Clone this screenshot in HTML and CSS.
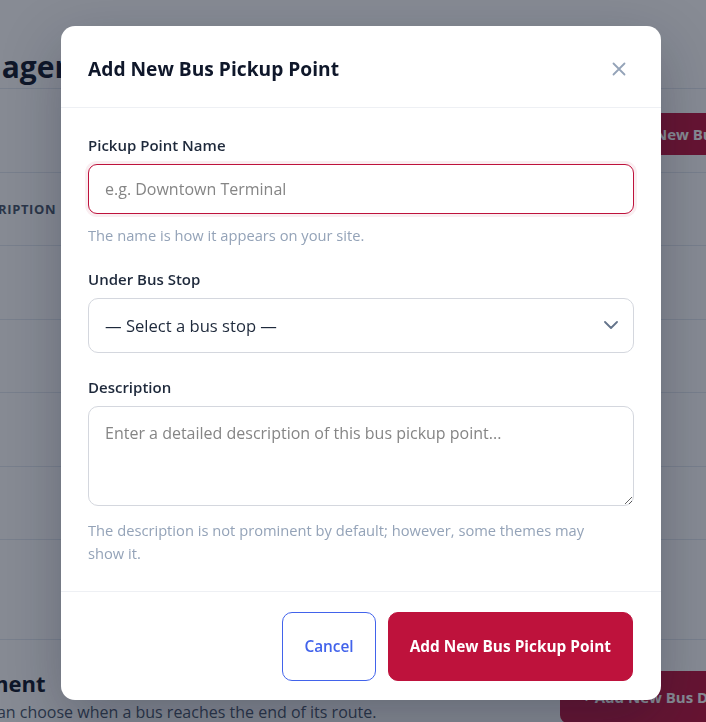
FILE: index.html
```html
<!DOCTYPE html>
<html lang="en">
<head>
<meta charset="utf-8">
<title>Add New Bus Pickup Point</title>
<link rel="stylesheet" href="styles.css">
</head>
<body>
<div class="page">
  <div class="page-head">
    <h1 class="page-title">Pickup Point Management</h1>
  </div>
  <div class="toolbar">
    <button class="page-btn" type="button">+ Add New Bus Pickup Point</button>
  </div>
  <div class="table">
    <div class="trow thead"><span class="th">Name</span><span class="th">Description</span><span class="th">Bus Stop</span></div>
    <div class="trow"></div>
    <div class="trow"></div>
    <div class="trow"></div>
    <div class="trow"></div>
    <div class="tfoot"></div>
  </div>
  <div class="section">
    <div class="section-text">
      <h2 class="section-title">Bus Return Arrangement</h2>
      <p class="section-desc">In this section, an operator can choose when a bus reaches the end of its route.</p>
    </div>
    <button class="page-btn page-btn-lg" type="button">+ Add New Bus Drop-off Point</button>
  </div>
</div>

<div class="overlay">
  <div class="modal" role="dialog" aria-labelledby="modal-title">
    <div class="modal-header">
      <h2 class="modal-title" id="modal-title">Add New Bus Pickup Point</h2>
      <button class="close-btn" type="button" aria-label="Close">
        <svg width="14" height="14" viewBox="0 0 14 14" fill="none" stroke="currentColor" stroke-width="1.8" stroke-linecap="round"><path d="M1.5 1.5L12.5 12.5M12.5 1.5L1.5 12.5"/></svg>
      </button>
    </div>
    <div class="modal-body">
      <div class="field">
        <label class="field-label" for="pp-name">Pickup Point Name</label>
        <input class="control control-focus" id="pp-name" type="text" placeholder="e.g. Downtown Terminal">
        <p class="hint">The name is how it appears on your site.</p>
      </div>
      <div class="field">
        <label class="field-label" for="pp-stop">Under Bus Stop</label>
        <div class="select-wrap">
          <select class="control control-select" id="pp-stop">
            <option>— Select a bus stop —</option>
          </select>
          <svg class="chevron" width="14" height="8" viewBox="0 0 14 8" fill="none" stroke="currentColor" stroke-width="1.8" stroke-linecap="round" stroke-linejoin="round"><path d="M1 1L7 7L13 1"/></svg>
        </div>
      </div>
      <div class="field">
        <label class="field-label" for="pp-desc">Description</label>
        <textarea class="control control-area" id="pp-desc" placeholder="Enter a detailed description of this bus pickup point..."></textarea>
        <p class="hint hint-long">The description is not prominent by default; however, some themes may show it.</p>
      </div>
    </div>
    <div class="modal-footer">
      <button class="btn btn-outline" type="button">Cancel</button>
      <button class="btn btn-primary" type="button">Add New Bus Pickup Point</button>
    </div>
  </div>
</div>
</body>
</html>
```

FILE: styles.css
```css
* { box-sizing: border-box; }

html, body {
  margin: 0;
  padding: 0;
  height: 100%;
  overflow: hidden;
  background: #ffffff;
  font-family: "Open Sans", "Noto Sans", Arial, sans-serif;
  color: #0f172a;
}

/* ---------- background page ---------- */
.page {
  width: 1200px;
  margin-left: -300px;
  padding: 0 40px;
}

.page-head {
  padding-top: 46px;
  border-bottom: 1px solid #e2e8f0;
}

.page-title {
  margin: 0;
  font-size: 30px;
  line-height: 42px;
  font-weight: 700;
  color: #0f172a;
}

.toolbar {
  display: flex;
  justify-content: flex-end;
  padding: 24px 20px 17px 0;
  border-bottom: 1px solid #e2e8f0;
}

.page-btn {
  height: 42px;
  padding: 0 22px;
  border: 0;
  border-radius: 8px;
  background: #be123c;
  color: #ffffff;
  font-family: inherit;
  font-size: 15px;
  font-weight: 700;
  white-space: nowrap;
  flex: none;
}

.page-btn-lg {
  height: 52px;
  margin-top: 3px;
}

.trow {
  display: grid;
  grid-template-columns: 223px 300px 1fr;
  align-items: center;
  height: 73.4px;
  border-bottom: 1px solid #e2e8f0;
}

.th {
  font-size: 13px;
  font-weight: 700;
  letter-spacing: 0.05em;
  text-transform: uppercase;
  color: #475569;
}

.tfoot {
  height: 100px;
  border-bottom: 1px solid #e2e8f0;
}

.section {
  display: flex;
  justify-content: space-between;
  align-items: flex-start;
  padding: 28px 35px 0 31px;
}

.section-text {
  flex: none;
  white-space: nowrap;
}

.section-title {
  margin: 0;
  font-size: 22px;
  line-height: 30px;
  font-weight: 700;
  color: #0f172a;
}

.section-desc {
  margin: 2px 0 0;
  padding-left: 14px;
  font-size: 16px;
  line-height: 24px;
  color: #475569;
}

/* ---------- overlay + modal ---------- */
.overlay {
  position: fixed;
  inset: 0;
  background: rgba(15, 23, 42, 0.5);
  display: flex;
  align-items: center;
  justify-content: center;
  padding-left: 16px;
  padding-top: 3px;
}

.modal {
  width: 600px;
  background: #ffffff;
  border-radius: 14px;
  box-shadow: 0 20px 60px rgba(15, 23, 42, 0.28);
}

.modal-header {
  display: flex;
  align-items: center;
  justify-content: space-between;
  height: 82px;
  padding: 6px 27px 0;
  border-bottom: 1px solid #eef0f4;
}

.modal-title {
  margin: 0;
  font-size: 19.2px;
  line-height: 28px;
  font-weight: 700;
  color: #0f172a;
}

.close-btn {
  width: 30px;
  height: 30px;
  padding: 0;
  border: 0;
  background: transparent;
  color: #94a3b8;
  display: flex;
  align-items: center;
  justify-content: center;
}

.modal-body {
  padding: 27px 27px 26px;
  display: flex;
  flex-direction: column;
  gap: 24px;
}

.field {
  display: flex;
  flex-direction: column;
}

.field-label {
  font-size: 15px;
  line-height: 20px;
  font-weight: 600;
  color: #1e293b;
  margin-bottom: 9px;
}

.control {
  width: 100%;
  font-family: inherit;
  font-size: 16px;
  color: #1e293b;
  background: #ffffff;
  border: 1px solid #d4d7de;
  border-radius: 10px;
  outline: none;
}

.control::placeholder { color: #858585; }

.control-focus {
  height: 50px;
  padding: 0 16px;
  border-color: #be123c;
  border-radius: 9px;
  box-shadow: 0 0 0 3px rgba(190, 18, 60, 0.07);
}

.select-wrap {
  position: relative;
}

.control-select {
  height: 55px;
  padding: 0 44px 0 16px;
  font-size: 16.6px;
  appearance: none;
  -webkit-appearance: none;
}

.chevron {
  position: absolute;
  right: 16px;
  top: 23px;
  color: #64748b;
  pointer-events: none;
}

.control-area {
  height: 100px;
  padding: 14px 16px;
  line-height: 24px;
  resize: vertical;
  display: block;
}

.hint {
  margin: 11px 0 0;
  font-size: 14.7px;
  line-height: 20px;
  color: #94a3b8;
}

.hint-long {
  max-width: 515px;
  margin-top: 13px;
  line-height: 23px;
}

.modal-footer {
  display: flex;
  justify-content: flex-end;
  gap: 12px;
  padding: 20px 28px 19px;
  border-top: 1px solid #eef0f4;
}

.btn {
  height: 69px;
  padding: 0 21px;
  border-radius: 10px;
  font-family: inherit;
  font-size: 15.4px;
  font-weight: 700;
}

.btn-outline {
  background: #ffffff;
  border: 1px solid #4263eb;
  color: #4263eb;
  font-weight: 600;
}

.btn-primary {
  background: #be123c;
  border: 1px solid #be123c;
  color: #ffffff;
}
```
